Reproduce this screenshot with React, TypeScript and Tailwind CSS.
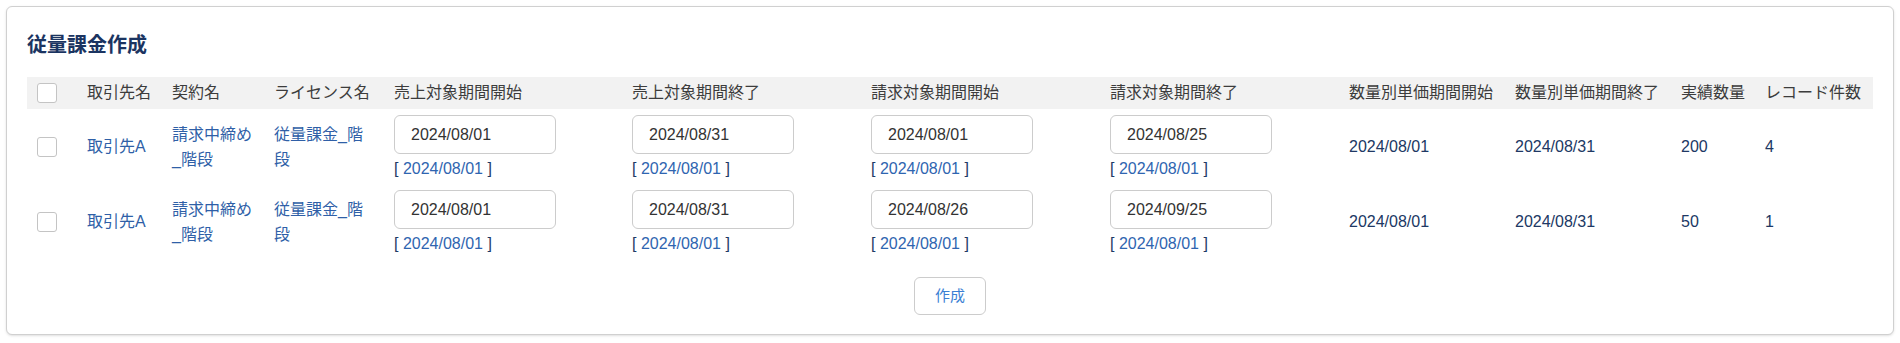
import React from 'react';

type Row = {
  client: string;
  contract: string;
  license: string;
  salesStart: string;
  salesEnd: string;
  billStart: string;
  billEnd: string;
  ref: string;
  tierStart: string;
  tierEnd: string;
  qty: number;
  records: number;
};

const rows: Row[] = [
  {
    client: '取引先A',
    contract: '請求中締め_階段',
    license: '従量課金_階段',
    salesStart: '2024/08/01',
    salesEnd: '2024/08/31',
    billStart: '2024/08/01',
    billEnd: '2024/08/25',
    ref: '2024/08/01',
    tierStart: '2024/08/01',
    tierEnd: '2024/08/31',
    qty: 200,
    records: 4,
  },
  {
    client: '取引先A',
    contract: '請求中締め_階段',
    license: '従量課金_階段',
    salesStart: '2024/08/01',
    salesEnd: '2024/08/31',
    billStart: '2024/08/26',
    billEnd: '2024/09/25',
    ref: '2024/08/01',
    tierStart: '2024/08/01',
    tierEnd: '2024/08/31',
    qty: 50,
    records: 1,
  },
];

const headers = [
  '取引先名',
  '契約名',
  'ライセンス名',
  '売上対象期間開始',
  '売上対象期間終了',
  '請求対象期間開始',
  '請求対象期間終了',
  '数量別単価期間開始',
  '数量別単価期間終了',
  '実績数量',
  'レコード件数',
];

function Checkbox() {
  return <span className="block w-[20px] h-[20px] rounded-[3px] border border-[#c4c4c4] bg-white" />;
}

function DateCell({ value, reference }: { value: string; reference: string }) {
  return (
    <td className="px-[10px] pt-[6px] pb-[5px] align-top">
      <input
        type="text"
        defaultValue={value}
        className="block w-[162px] h-[39px] rounded-md border border-[#cccccc] bg-white pl-[16px] text-[16px] text-[#333333] outline-none"
      />
      <div className="mt-[5px] leading-[20px] text-[#1e3a66] whitespace-nowrap">
        [ <span className="text-[#2f65b0]">{reference}</span> ]
      </div>
    </td>
  );
}

export default function App() {
  return (
    <div className="bg-white min-h-[343px] p-[6px] font-['Liberation_Sans','Noto_Sans_CJK_JP',sans-serif] text-[16px]">
      <div className="rounded-md border border-[#d0d0d0] bg-white shadow-sm px-5 pt-[24px] pb-[19px]">
        <h2 className="text-[20px] leading-[28px] font-bold text-[#1b3461]">従量課金作成</h2>

        <table className="mt-[18px] w-full table-fixed border-collapse">
          <colgroup>
            <col className="w-[50px]" />
            <col className="w-[85px]" />
            <col className="w-[102px]" />
            <col className="w-[120px]" />
            <col className="w-[238px]" />
            <col className="w-[239px]" />
            <col className="w-[239px]" />
            <col className="w-[239px]" />
            <col className="w-[166px]" />
            <col className="w-[166px]" />
            <col className="w-[84px]" />
            <col />
          </colgroup>
          <thead>
            <tr className="bg-[#f2f2f2] h-[32px]">
              <th className="px-[10px] align-middle">
                <Checkbox />
              </th>
              {headers.map((h) => (
                <th key={h} className="px-[10px] text-left font-normal text-[#3c3c3c] whitespace-nowrap leading-[32px]">
                  {h}
                </th>
              ))}
            </tr>
          </thead>
          <tbody>
            {rows.map((r, i) => (
              <tr key={i} className="h-[75px]">
                <td className="px-[10px] align-middle">
                  <Checkbox />
                </td>
                <td className="px-[10px] align-middle text-[#2f5fa7]">{r.client}</td>
                <td className="px-[10px] align-middle leading-[25px] text-[#2f5fa7]">{r.contract}</td>
                <td className="px-[10px] align-middle leading-[25px] text-[#2f5fa7]">{r.license}</td>
                <DateCell value={r.salesStart} reference={r.ref} />
                <DateCell value={r.salesEnd} reference={r.ref} />
                <DateCell value={r.billStart} reference={r.ref} />
                <DateCell value={r.billEnd} reference={r.ref} />
                <td className="px-[10px] align-middle text-[#203864]">{r.tierStart}</td>
                <td className="px-[10px] align-middle text-[#203864]">{r.tierEnd}</td>
                <td className="px-[10px] align-middle text-[#203864]">{r.qty}</td>
                <td className="px-[10px] align-middle text-[#203864]">{r.records}</td>
              </tr>
            ))}
          </tbody>
        </table>

        <div className="mt-[18px] flex justify-center">
          <button className="w-[72px] h-[38px] rounded-md border border-[#cccccc] bg-white text-[15px] text-[#3b7fd4]">
            作成
          </button>
        </div>
      </div>
    </div>
  );
}
